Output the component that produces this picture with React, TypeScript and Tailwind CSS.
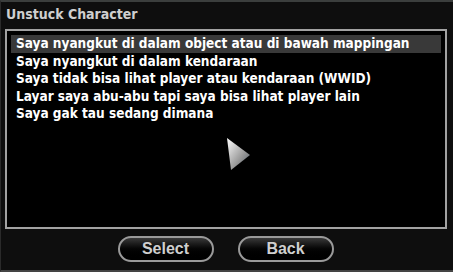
const OPTIONS = [
  "Saya nyangkut di dalam object atau di bawah mappingan",
  "Saya nyangkut di dalam kendaraan",
  "Saya tidak bisa lihat player atau kendaraan (WWID)",
  "Layar saya abu-abu tapi saya bisa lihat player lain",
  "Saya gak tau sedang dimana",
];

function GameButton({ label }: { label: string }) {
  return (
    <button className="flex h-[26px] w-[96px] items-center justify-center rounded-full border-2 border-[#9a9a9a] bg-gradient-to-b from-[#3a3a3a] via-[#050505] to-[#000] font-['Liberation_Sans',Arial,sans-serif] text-[16px] font-bold text-[#cfcfcf]">
      {label}
    </button>
  );
}

export default function App() {
  return (
    <div className="relative flex h-[272px] w-[453px] flex-col border-t-2 border-l border-b-2 border-t-[#3b3e3d] border-l-[#2a2a2a] border-b-[#444] bg-[#0e0e0e] font-['DejaVu_Sans_Condensed','DejaVu_Sans',Verdana,sans-serif]">
      {/* Titel */}
      <div className="flex h-[27px] items-center px-[5px] pb-[2px] text-[14px] font-bold text-[#cfcfcf]">
        Unstuck Character
      </div>

      {/* Liste */}
      <div className="ml-[4px] mr-[6px] h-[200px] border-2 border-[#a2a2a2] bg-black p-[4px]">
        <ul className="flex flex-col">
          {OPTIONS.map((text, i) => (
            <li
              key={text}
              className={
                "h-[17.5px] px-[5px] text-[13.5px] font-bold leading-[17.5px] text-white " +
                (i === 0 ? "bg-[#393939]" : "")
              }
            >
              {text}
            </li>
          ))}
        </ul>
      </div>

      {/* Buttons */}
      <div className="flex flex-1 items-center justify-center gap-[24px] pb-[2px] pr-[3px]">
        <GameButton label="Select" />
        <GameButton label="Back" />
      </div>

      {/* Mauszeiger */}
      <svg className="absolute left-[225px] top-[134px]" width="26" height="34" viewBox="0 0 26 34">
        <defs>
          <linearGradient id="cur" x1="0" y1="0" x2="1" y2="1">
            <stop offset="0" stopColor="#ffffff" />
            <stop offset="0.6" stopColor="#9a9a9a" />
            <stop offset="1" stopColor="#4a5560" />
          </linearGradient>
        </defs>
        <polygon points="1,2 24,19 5,34" fill="url(#cur)" />
      </svg>
    </div>
  );
}
